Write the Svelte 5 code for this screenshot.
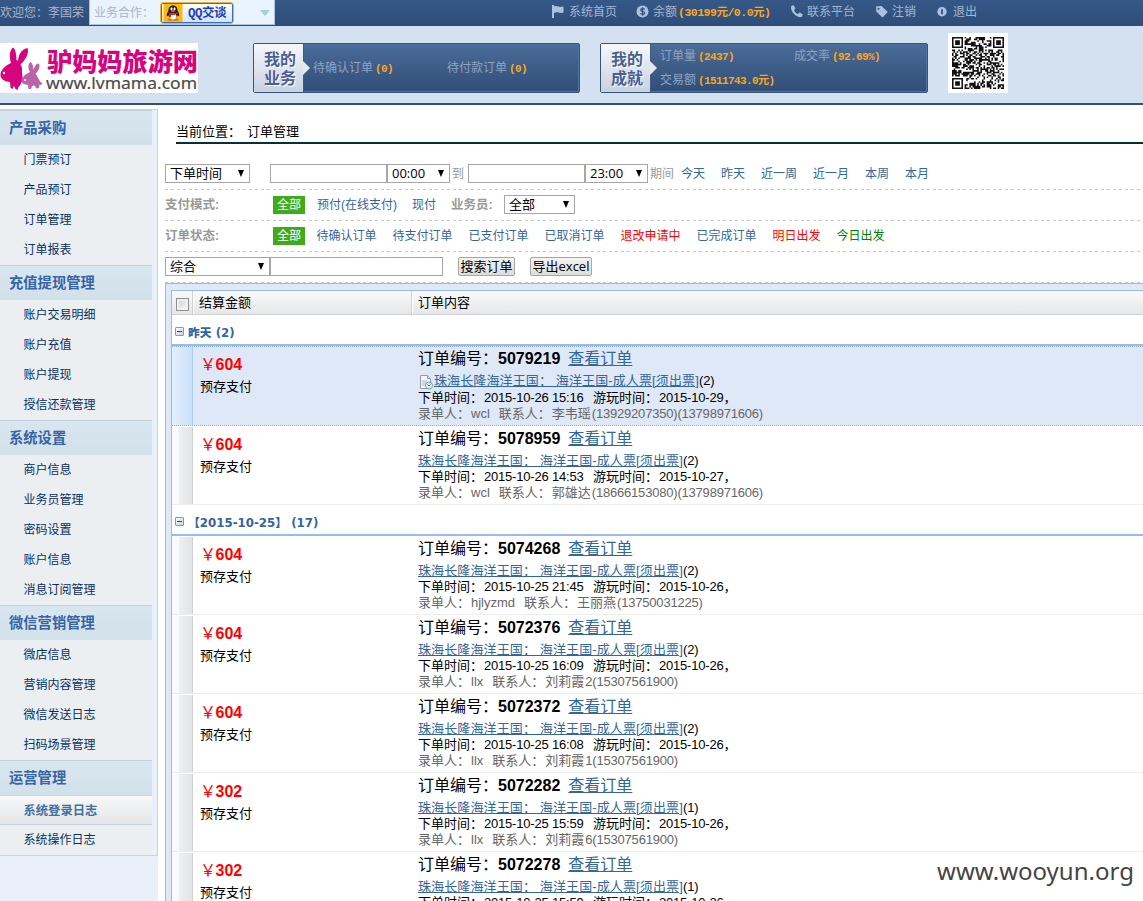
<script>
  const menu = [
    { title: '产品采购', items: ['门票预订', '产品预订', '订单管理', '订单报表'] },
    { title: '充值提现管理', items: ['账户交易明细', '账户充值', '账户提现', '授信还款管理'] },
    { title: '系统设置', items: ['商户信息', '业务员管理', '密码设置', '账户信息', '消息订阅管理'] },
    { title: '微信营销管理', items: ['微店信息', '营销内容管理', '微信发送日志', '扫码场景管理'] },
    { title: '运营管理', items: ['系统登录日志', '系统操作日志'], last: true }
  ];
  const periods = ['今天', '昨天', '近一周', '近一月', '本周', '本月'];
  const states = [
    ['待确认订单', ''], ['待支付订单', ''], ['已支付订单', ''], ['已取消订单', ''],
    ['退改申请中', 'red'], ['已完成订单', ''], ['明日出发', 'red'], ['今日出发', 'green']
  ];
  const groups = [
    {
      title: '昨天 (2)',
      rows: [
        { sel: true, p: 604, id: '5079219', n: 2, t: '2015-10-26 15:16', d: '2015-10-29', by: 'wcl', who: '李韦瑶', tel: '(13929207350)(13798971606)' },
        { p: 604, id: '5078959', n: 2, t: '2015-10-26 14:53', d: '2015-10-27', by: 'wcl', who: '郭雄达', tel: '(18666153080)(13798971606)' }
      ]
    },
    {
      title: '【2015-10-25】 (17)',
      rows: [
        { p: 604, id: '5074268', n: 2, t: '2015-10-25 21:45', d: '2015-10-26', by: 'hjlyzmd', who: '王丽燕', tel: '(13750031225)' },
        { p: 604, id: '5072376', n: 2, t: '2015-10-25 16:09', d: '2015-10-26', by: 'llx', who: '刘莉霞', tel: '2(15307561900)' },
        { p: 604, id: '5072372', n: 2, t: '2015-10-25 16:08', d: '2015-10-26', by: 'llx', who: '刘莉霞', tel: '1(15307561900)' },
        { p: 302, id: '5072282', n: 1, t: '2015-10-25 15:59', d: '2015-10-26', by: 'llx', who: '刘莉霞', tel: '6(15307561900)' },
        { p: 302, id: '5072278', n: 1, t: '2015-10-25 15:59', d: '2015-10-26' }
      ]
    }
  ];

  // QR code modules
  const N = 33;
  let seed = 77;
  const rnd = () => ((seed = (seed * 1103515245 + 12345) % 2147483648) / 2147483648);
  function finder(x, y, ox, oy) {
    const a = x - ox, b = y - oy;
    if (a < -1 || b < -1 || a > 7 || b > 7) return null;
    if (a < 0 || b < 0 || a > 6 || b > 6) return false;
    const r = Math.max(Math.abs(a - 3), Math.abs(b - 3));
    return r !== 2;
  }
  let qr = '';
  for (let y = 0; y < N; y++)
    for (let x = 0; x < N; x++) {
      const v = rnd() < 0.52;
      const f = finder(x, y, 0, 0) ?? finder(x, y, N - 7, 0) ?? finder(x, y, 0, N - 7) ?? v;
      if (f) qr += `M${x} ${y}h1v1h-1z`;
    }
</script>

{#snippet select(text, w, gap = 0)}
  <span class="select" style="width:{w}px;margin-left:{gap}px"><span>{text}</span><i></i></span>
{/snippet}

<div class="page">
  <div class="topbar">
    <span class="hello">欢迎您：李国荣</span>
    <div class="coop">
      <span>业务合作：</span>
      <div class="qq">
        <svg width="20" height="19" viewBox="0 0 20 19">
          <rect width="20" height="19" fill="#fdb913" />
          <ellipse cx="7" cy="16.5" rx="3" ry="1.5" fill="#f07800" /><ellipse cx="13" cy="16.5" rx="3" ry="1.5" fill="#f07800" />
          <path d="M10 1.5C6.500 1.500 5.200 4 5.200 7 3.700 9 3 11 3.600 13.300L5 12c1 4 9 4 10 0l1.400 1.300C17 11 16.300 9 14.800 7 14.800 4 13.500 1.500 10 1.500Z" fill="#1b1b1b" />
          <ellipse cx="10" cy="12.800" rx="3.600" ry="3.300" fill="#fff" />
          <ellipse cx="8.400" cy="5" rx="1.100" ry="1.600" fill="#fff" /><ellipse cx="11.600" cy="5" rx="1.100" ry="1.600" fill="#fff" />
          <ellipse cx="10" cy="7.500" rx="2.600" ry=".8" fill="#f9a000" />
          <path d="M5 8.500q5 2.500 10 0l.3 1.800q-2.600 1.300-5.300 1.200l-2 .1-.4 2.600-1.800-.4.100-2.600Z" fill="#e3171b" />
        </svg>
        <b>QQ交谈</b>
      </div>
      <i class="tri"></i>
    </div>
    <nav>
      <a style="width:85px"><svg width="13" height="13" viewBox="0 0 13 13"><path d="M1 0h2v1.500c3-1.500 5 1.500 9.500 0v6C8.500 9 6 6 3 8v5H1Z" /></svg>系统首页</a>
      <a style="width:154px"><svg width="13" height="13" viewBox="0 0 13 13"><circle cx="6.500" cy="6.500" r="6" /><path d="M8.700 4.500C8 3.300 4.700 3.300 4.700 5c0 1.900 4 1.100 4 3 0 1.700-3.500 1.700-4.300.3M6.500 2.200v8.600" fill="none" stroke="#2f4f7b" stroke-width="1.200" /></svg>余额<b class="balance">(30199元/0.0元)</b></a>
      <a style="width:85px"><svg width="13" height="13" viewBox="0 0 13 13"><path d="M1.200 1 3.700.3l1.700 3.200-1.500 1.500c.8 1.900 2.200 3.300 4.100 4.100l1.500-1.500 3.200 1.700-.6 2.500C7 13.600-.2 6.500 1.200 1Z" /></svg>联系平台</a>
      <a style="width:61px"><svg width="13" height="13" viewBox="0 0 13 13"><path fill-rule="evenodd" d="M1 1.500 6.500 1 12.800 7 7.500 12.500 1.300 6.500ZM3.500 2.700a1 1 0 1 0 .1 0Z" /></svg>注销</a>
      <a><svg width="13" height="13" viewBox="0 0 13 13"><circle cx="6" cy="6.800" r="4.700" /><path d="M6 4.300v5" stroke="#2f4f7b" stroke-width="1.700" /></svg>退出</a>
    </nav>
  </div>

  <header>
    <svg class="logo" width="198" height="50" viewBox="0 0 198 50">
      <rect width="198" height="50" fill="#fff" />
      <path fill="#d6057d" d="M11 20C9 14 9.500 7 13 4.500c2.500 1 3.500 7.500 3.500 12.500l1.500 1C18.500 11 22 6 27.500 5 29.500 10 25.500 17 20.500 21.500c2 2.500 1.800 6.500 1.500 9 1.500 5-.5 11-3.500 13.500l-1 3-2-1-1.500-3-1.500 3-2-1-.5-6c-4-.5-9-2-9.500-6.500C0 27 6 22 11 20Z" />
      <path fill="#bb62a8" d="M30 29c-2-3-2.500-8 .5-10 2 1 3 5 3 8.500C34 24 36 20.500 39 20.500c1.500 4-.5 7.500-3.500 10 2 2.500 2.500 5 5 8.500l2 1-1.500 2-1.500-.5-.5 3.500-3 .5-1-3-3 .500-1 3h-2.500l-.5-4c-3-.5-6-1-6.500-4 0-4 5-7.500 8.500-9Z" />
      <circle cx="4" cy="30" r="1.200" fill="#fff" /><circle cx="25" cy="37" r="1" fill="#fff" />
      <text x="47" y="28" font-size="24.500" font-weight="900" fill="#d6057d" textLength="151" lengthAdjust="spacingAndGlyphs" class="cn">驴妈妈旅游网</text>
      <text x="46" y="46" font-size="16.500" fill="#4c4c4c" stroke="#4c4c4c" stroke-width=".2" textLength="151" lengthAdjust="spacingAndGlyphs" class="en">www.lvmama.com</text>
    </svg>
    <section class="panel first">
      <div class="tab">我的<br />业务</div>
      <div class="stats one">
        <span>待确认订单<b>(0)</b></span><span>待付款订单<b>(0)</b></span>
      </div>
    </section>
    <section class="panel second">
      <div class="tab">我的<br />成就</div>
      <div class="stats two">
        <span>订单量<b>(2437)</b></span><span>成交率<b>(92.69%)</b></span><span>交易额<b>(1511743.0元)</b></span>
      </div>
    </section>
    <svg class="qr" width="60" height="60" viewBox="0 0 60 60"><rect width="60" height="60" fill="#fff" /><path transform="translate(4 4) scale(1.576)" d={qr} fill="#111" /></svg>
  </header>

  <div class="body">
    <aside>
      <div class="menu">
        {#each menu as g}
          <div class="group" class:last={g.last}>
            <h3>{g.title}</h3>
            {#each g.items as it}<a>{it}</a>{/each}
          </div>
        {/each}
      </div>
    </aside>

    <main>
      <div class="crumb">当前位置：<span>订单管理</span></div>

      <div class="filters">
        <div class="frow">
          {@render select('下单时间', 85)}
          <span class="input" style="width:117px;margin-left:20px"></span>
          {@render select('00:00', 63)}
          <span class="gray to">到</span>
          <span class="input" style="width:117px"></span>
          {@render select('23:00', 63)}
          <span class="gray period">期间</span>
          <div class="links">{#each periods as p}<a>{p}</a>{/each}</div>
        </div>
        <div class="frow">
          <b class="label">支付模式:</b>
          <span class="badge">全部</span>
          <a class="pre">预付(在线支付)</a><a class="cash">现付</a>
          <b class="sales">业务员:</b>
          {@render select('全部', 71)}
        </div>
        <div class="frow">
          <b class="label">订单状态:</b>
          <span class="badge">全部</span>
          <div class="links states">{#each states as [s, c]}<a class={c}>{s}</a>{/each}</div>
        </div>
        <div class="frow">
          {@render select('综合', 105)}
          <span class="input" style="width:173px"></span>
          <span class="btn" style="width:57px;margin-left:15px">搜索订单</span>
          <span class="btn" style="width:62px;margin-left:15px">导出excel</span>
        </div>
      </div>

      <div class="grid">
        <div class="inner">
          <div class="thead">
            <span class="c0"><i></i></span><span class="c1">结算金额</span><span class="c2">订单内容</span>
          </div>
          {#each groups as g}
            <div class="gh"><i class="minus"></i><b>{g.title}</b></div>
            {#each g.rows as r}
              <div class="row" class:sel={r.sel}>
                <div class="gut"></div>
                <div class="money"><strong><em>￥</em>{r.p}</strong><span>预存支付</span></div>
                <div class="info">
                  <div class="l1"><span>订单编号：</span><b>{r.id}</b><a>查看订单</a></div>
                  <div class="l2">
                    {#if r.sel}<svg width="16" height="16" viewBox="0 0 16 16"><path d="M2.500 1.500h7l3 3v10h-10Z" fill="#f3f6fb" stroke="#8b9bb8" /><path d="M9.500 1.500v3h3" fill="#c9d4e8" stroke="#8b9bb8" /><path d="M4 7h5M4 9h4M4 11h3" stroke="#a9b6cf" /><circle cx="11" cy="11.500" r="3.500" fill="#e8f4f4" stroke="#6d9aa5" /><path d="M9.500 10.500 11 12l1.500-1.500" fill="none" stroke="#2d6c88" /></svg>{/if}<a>珠海长隆海洋王国： 海洋王国-成人票[须出票]</a>({r.n})
                  </div>
                  <div class="l3"><span class="k">下单时间：</span><span class="t">{r.t}</span><span class="k">游玩时间：</span><span>{r.d}</span>，</div>
                  {#if r.by}
                    <div class="l4"><span class="k4">录单人：</span><span class="by">{r.by}</span><span class="k4">联系人：</span>{r.who}<span class="tel">{r.tel}</span></div>
                  {/if}
                </div>
              </div>
            {/each}
          {/each}
        </div>
      </div>
    </main>
  </div>
  <svg class="mark" width="200" height="34"><text x="0" y="25" font-size="24" textLength="197" lengthAdjust="spacingAndGlyphs">www.wooyun.org</text></svg>
</div>

<style>
  :global(body) { margin: 0; overflow: hidden; }
  .page {
    position: relative; width: 1143px; height: 901px; overflow: hidden; background: #fff;
    font: 12px/18px "Liberation Sans", "Noto Sans CJK SC", sans-serif; color: #000;
    display: flex; flex-direction: column;
  }
  .page * { box-sizing: border-box; white-space: nowrap; }
  i, em { font-style: normal; }

  .topbar { flex: none; height: 26px; display: flex; background: linear-gradient(#365887, #2e4e79); color: #a3b6d2; }
  .hello { width: 89px; line-height: 26px; }
  .coop { width: 186px; height: 25px; background: #e9f4fe; border: 1px solid #a5c8e4; border-top: 0; color: #a9b5c2; display: flex; line-height: 26px; padding-left: 4px; }
  .coop > span { width: 66px; }
  .qq { width: 74px; height: 22px; margin-top: 2px; border: 1px solid #f0b429; box-shadow: inset 0 0 0 1px #3f6cb5; border-radius: 3px; background: linear-gradient(#fff, #cfe2fb); display: flex; align-items: center; padding-left: 2px; overflow: hidden; }
  .qq svg { height: 18px; flex: none; }
  .qq b { color: #1c41b4; margin-left: 5px; line-height: 20px; padding-top: 2px; font-family: "Liberation Mono", "Noto Sans CJK SC", monospace; letter-spacing: -.5px; font-size: 12.500px; }
  .tri { margin: 10px 0 0 26px; width: 0; height: 0; border: 5px solid transparent; border-top: 6px solid #a5cce6; border-bottom: 0; }
  nav { display: flex; margin-left: 276px; line-height: 25px; }
  nav a { display: flex; }
  nav svg { fill: #a9c3df; margin: 5px 5px 0 0; flex: none; }
  nav a:nth-child(n+2) svg { margin-right: 4px; }
  b.balance, .stats b { color: #fba61c; font-family: "Liberation Mono", "Noto Sans CJK SC", monospace; }
  b.balance { margin-left: 1px; font-size: 11.500px; letter-spacing: -.5px; }

  header { flex: none; height: 79px; background: #d4e1f1; border-bottom: 2px solid #2f507e; display: flex; }
  .logo { margin-top: 17px; flex: none; }
  .cn { font-family: "Noto Sans CJK SC", sans-serif; }
  .en { font-family: "Noto Sans", sans-serif; }
  .panel { margin-top: 17px; height: 50px; border: 1px solid #365478; border-radius: 2px; display: flex; background: linear-gradient(#4b6c97, #2f4e78); box-shadow: inset 0 0 0 1px #4f739e; }
  .first { width: 327px; margin-left: 55px; }
  .second { width: 328px; margin-left: 20px; }
  .tab { position: relative; flex: none; width: 50px; height: 48px; background: linear-gradient(#f6f8fa, #c8d1e1); border-right: 1px solid #40597c; font-size: 16px; font-weight: bold; line-height: 19px; color: #4b5f95; padding: 6px 0 0 10px; text-shadow: 1px 1px 0 #fff; }
  .tab::after { content: ''; position: absolute; left: 49px; top: 17px; border: 7px solid transparent; border-left-color: #e4e9f0; border-right: 0; }
  .stats { color: #8ea4c2; display: grid; align-content: start; grid-template-columns: 134px 134px; line-height: 24px; padding-left: 9px; }
  .one { padding-top: 12px; }
  .stats span { height: 24px; }
  .stats b { font-size: 11px; letter-spacing: -.6px; margin-left: 2px; }
  .qr { margin: 7px 0 0 20px; flex: none; }

  .body { flex: 1; min-height: 0; display: flex; }
  aside { width: 158px; flex: none; background: #e9f0f9; border-top: 4px solid #fff; }
  .menu { border: 1px solid #c8d5e0; border-left: 0; padding-right: 5px; }
  .group h3 { margin: 0; height: 35px; border-top: 1px solid #c2d0db; background: linear-gradient(#d8e6f0, #d2e0ea); font-size: 14.300px; line-height: 35px; padding-left: 9px; color: #3664a4; font-weight: bold; }
  .group a { display: block; height: 30px; background: #ebeff2; line-height: 31px; padding-left: 23.500px; color: #0a2f60; }
  .last a:nth-child(2) { font-weight: bold; line-height: 30px; font-size: 12.300px; color: #4470a0; background: linear-gradient(#f8f8f8, #e4e6e8); border-top: 1px solid #ccd6de; border-bottom: 1px solid #c2cedb; }
  .last a:nth-child(3) { line-height: 30px; }

  main { flex: 1; min-width: 0; padding-left: 7px; }
  .crumb { margin: 16px 0 0 11px; height: 23px; border-bottom: 2px solid #033; font-size: 13px; line-height: 22px; }
  .crumb span { margin-left: 6px; }
  .filters { margin-top: 15px; }
  .frow { height: 31px; display: flex; align-items: center; background: repeating-linear-gradient(90deg, #c8c8c8 0 3px, transparent 3px 6px) left bottom / 100% 1px no-repeat; padding-bottom: 2px; line-height: 20px; }
  .select, .input, .btn { height: 19px; border: 1px solid #a6a6a6; background: #fff; flex: none; display: flex; align-items: center; }
  .select { justify-content: space-between; padding: 0 5px 0 4px; font-size: 13px; }
  .select span { font-family: "Open Sans", "Noto Sans CJK SC", sans-serif; font-size: 13px; line-height: 17px; }
  .select i { border: 3.500px solid transparent; border-top: 7px solid #000; border-bottom: 0; }
  .btn { justify-content: center; font: 13px/17px "Open Sans", "Noto Sans CJK SC", sans-serif; background: linear-gradient(#f4f4f4, #dcdcdc); border-radius: 2px; }
  .gray, .label, .sales { color: #999; }
  .gray, .frow a, .label, .sales { padding-top: 1px; }
  .to { width: 18px; padding-left: 2px; }
  .period { padding-left: 2px; width: 25px; }
  .links { display: flex; gap: 16px; margin-left: 8px; }
  .frow a { color: #369; }
  .label { width: 108px; font-size: 12.500px; }
  .sales { width: 53px; font-size: 12.500px; margin-left: 15px; }
  .badge { background: #3fab1b; color: #fff; width: 32px; height: 18px; text-align: center; line-height: 19px; }
  .pre { margin-left: 12px; }
  .cash { margin-left: 15px; }
  .states { margin-left: 11.500px; }
  .frow a.red { color: #f00; }
  .frow a.green { color: #008000; }

  .grid { border: 1px solid #99bbe8; border-right: 0; background: #dfe8f6; padding: 6px 0 0 5px; }
  .inner { border: 1px solid #99bbe8; border-right: 0; background: #fff; }
  .thead { height: 24px; display: flex; background: linear-gradient(#fafafa, #e6e7e9); border-bottom: 1px solid #d0d0d0; font-size: 13px; line-height: 24px; }
  .thead span { border-right: 1px solid #d0d0d0; box-shadow: 1px 0 #fff; }
  .c0 { width: 21px; padding: 7px 0 0 4px; }
  .c0 i { display: block; width: 13px; height: 13px; border: 1px solid #8e8f8f; background: linear-gradient(135deg, #ccc, #fff); box-shadow: inset 0 0 0 2px #f0f0f0; }
  .c1 { width: 219px; padding-left: 6px; }
  .thead .c2 { padding-left: 6px; border: 0; box-shadow: none; }
  .gh { height: 31px; border-bottom: 2px solid #99bbe8; display: flex; padding: 9px 0 0 3px; font: bold 11.800px/18px "DejaVu Sans", "Noto Sans CJK SC", sans-serif; color: #3764a0; }
  .gh b { margin-left: 4px; }
  .minus { width: 9px; height: 9px; margin-top: 3px; border: 1px solid #7f9ab8; border-radius: 1px; background: linear-gradient(#345, #345) center / 5px 1px no-repeat, linear-gradient(135deg, #fff, #c3d3e4); }
  .row { height: 79px; display: flex; border-bottom: 1px solid #ededed; border-top: 1px solid #fff; }
  .gut { width: 21px; border-right: 1px solid #d0d0d0; background: linear-gradient(90deg, #fafafa 0 7px, #eeeff0 7px, #e3e4e6); }
  .sel { height: 80px; background: #dfe8f6; border-top: 1px dotted #8fb0e2; border-bottom: 1px dotted #8fb0e2; }
  .sel .gut { background: linear-gradient(90deg, #e4effc, #cbe1fb); border-color: #aaccf6; }
  .money { width: 219px; padding: 6px 0 0 7px; display: flex; flex-direction: column; }
  .money strong { color: #f00; font-size: 16px; line-height: 20px; }
  .money em { font-weight: normal; display: inline-block; width: 15.500px; font-family: "Noto Sans CJK SC"; }
  .money span { font-size: 13px; line-height: 22px; margin-top: 1px; }
  .info { font-size: 13px; padding: 0 0 0 6px; }
  .l1 { font-size: 16px; line-height: 24px; }
  .l1 a { margin-left: 8px; }
  .l1 a, .l2 a { color: #369; text-decoration: underline; }
  .l2 { line-height: 20px; height: 18px; display: flex; letter-spacing: -.1px; }
  .sel .l2 { height: 19px; }
  .l2 a { letter-spacing: .12px; }
  .l2 svg { margin-top: 3px; }
  .l3, .l4 { line-height: 16px; height: 16px; display: flex; letter-spacing: -.2px; }
  .k { width: 66px; letter-spacing: 0; }
  .t { width: 109px; }
  .k4 { width: 53px; letter-spacing: 0; }
  .l4 { color: #666; letter-spacing: 0; }
  .by { margin-right: 9px; }
  .tel { letter-spacing: -.2px; margin-left: 1px; }

  .mark { position: absolute; left: 937px; top: 855px; font-family: "Noto Sans", sans-serif; fill: #444; }
</style>
